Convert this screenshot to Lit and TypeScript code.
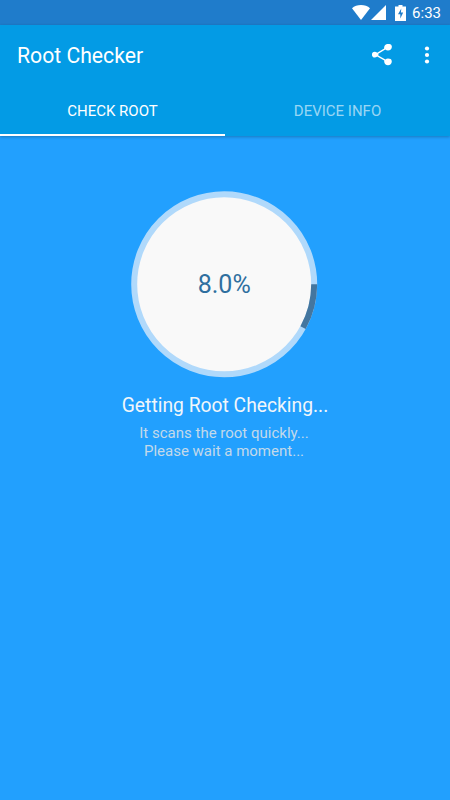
import { LitElement, html, css } from 'lit';
import { customElement } from 'lit/decorators.js';

const RADIUS = 90;
const PROGRESS = 8;
const CX = 93.2;
const CY = 94.3;

@customElement('app-root')
export class AppRoot extends LitElement {
  static styles = css`
    :host {
      display: block;
      width: 450px;
      height: 800px;
      background: #22a0fe;
      font-family: Roboto, "Liberation Sans", sans-serif;
      overflow: hidden;
    }
    .status {
      height: 25px;
      background: #1f7ccb;
      display: flex;
      align-items: center;
      justify-content: flex-end;
      color: #fff;
      font-size: 15px;
      padding-right: 9px;
      box-sizing: border-box;
    }
    .status svg {
      display: block;
      fill: #fff;
    }
    .wifi { margin-right: 1px; }
    .signal { margin-right: 9px; }
    .battery { margin-right: 6px; }
    .header {
      background: #039be5;
      box-shadow: 0 1px 3px rgba(0, 0, 0, 0.25);
      position: relative;
    }
    .toolbar {
      height: 62px;
      display: flex;
      align-items: center;
      box-sizing: border-box;
      padding: 0 20px 2px 17px;
    }
    .title {
      flex: 1;
      color: #fff;
      font-size: 21.2px;
      font-weight: 400;
    }
    .toolbar svg {
      display: block;
      fill: #fff;
    }
    .share { margin-right: 32px; }
    .tabs {
      display: flex;
      height: 49px;
    }
    .tab {
      flex: 1;
      display: flex;
      align-items: center;
      justify-content: center;
      box-sizing: border-box;
      font-size: 15px;
      color: rgba(255, 255, 255, 0.6);
      border-bottom: 2px solid transparent;
    }
    .tab.active {
      color: #fff;
      border-bottom-color: #fff;
    }
    .content {
      display: flex;
      flex-direction: column;
      align-items: center;
      padding-top: 54px;
    }
    .dial {
      width: 188px;
      height: 188px;
      display: block;
    }
    .dial text {
      font-family: Roboto, "Liberation Sans", sans-serif;
      font-size: 25px;
      fill: #2f6f9f;
      text-anchor: middle;
    }
    .heading {
      margin-top: 16px;
      color: #f1f6fa;
      font-size: 19.3px;
      line-height: 24px;
    }
    .hint {
      margin: 6px 2px 0 0;
      color: #c3d9ea;
      font-size: 15px;
      line-height: 18px;
      text-align: center;
    }
  `;

  render() {
    const angle = (PROGRESS / 100) * 2 * Math.PI;
    const endX = CX + RADIUS * Math.cos(angle);
    const endY = CY + RADIUS * Math.sin(angle);
    return html`
      <div class="status">
        <svg class="wifi" width="18" height="15" viewBox="0 0 20 15" preserveAspectRatio="none"><path d="M10 15 0 3.2C2.6 1.2 6.1 0 10 0s7.4 1.2 10 3.2z"/></svg>
        <svg class="signal" width="15" height="15" viewBox="0 0 14 14"><path d="M0 14 14 0v14z"/></svg>
        <svg class="battery" width="11" height="16" viewBox="0 0 11 16"><path fill-rule="evenodd" d="M3.500 0h4v1.500H11V16H0V1.500h3.500zM6.300 3.500 3 9.300h2.300V13.500L8.200 7.500H5.900z"/></svg>
        <span>6:33</span>
      </div>
      <div class="header">
        <div class="toolbar">
          <div class="title">Root Checker</div>
          <svg class="share" width="20" height="22" viewBox="0 0 20 22"><path d="M16 14.600c-1 0-1.900.4-2.600 1L6.300 11.500c.1-.3.1-.6.1-.9s0-.6-.1-.9l7-4.100c.7.6 1.600 1 2.700 1 2.200 0 3.900-1.700 3.900-3.800S18.200-.1 16-.1s-3.900 1.700-3.900 3.800c0 .3 0 .6.100.9l-7 4.100C4.500 8.100 3.600 7.700 2.600 7.700 1.100 7.700-.1 9-.1 10.600s1.200 2.900 2.700 2.900c1 0 1.900-.4 2.600-1l7.100 4.100c-.1.300-.1.600-.1.800 0 2.100 1.700 3.800 3.800 3.800s3.800-1.700 3.800-3.800-1.700-2.800-3.800-2.800z"/></svg>
          <svg width="6" height="18" viewBox="0 0 6 18"><circle cx="3" cy="2.500" r="2.100"/><circle cx="3" cy="9" r="2.100"/><circle cx="3" cy="15.500" r="2.100"/></svg>
        </div>
        <div class="tabs">
          <div class="tab active">CHECK ROOT</div>
          <div class="tab">DEVICE INFO</div>
        </div>
      </div>
      <div class="content">
        <svg class="dial" viewBox="0 0 188 188">
          <circle cx="${CX}" cy="${CY}" r="${RADIUS}" fill="#f9f9f9" stroke="#b0d9fb" stroke-width="6"/>
          <path d="M${CX + RADIUS} ${CY}A${RADIUS} ${RADIUS} 0 0 1 ${endX} ${endY}" fill="none" stroke="#44769f" stroke-width="6"/>
          <text x="${CX}" y="103">8.0%</text>
        </svg>
        <div class="heading">Getting Root Checking...</div>
        <div class="hint">It scans the root quickly...<br />Please wait a moment...</div>
      </div>
    `;
  }
}
